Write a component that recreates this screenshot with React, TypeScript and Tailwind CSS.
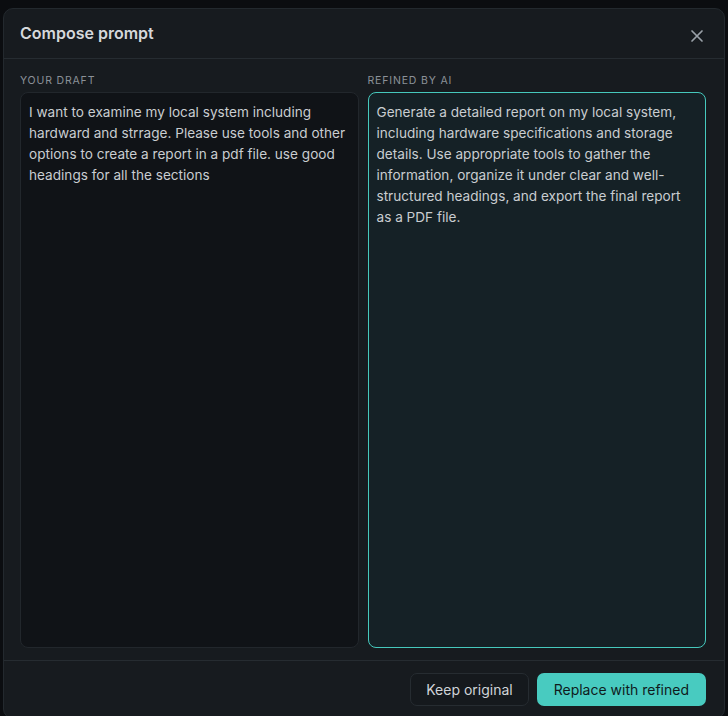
import React from "react";

export default function App() {
  return (
    <div
      className="h-[716px] w-[728px] overflow-hidden bg-[#0b0d10] pl-[3px] pr-[3px] pt-[8px]"
      style={{ fontFamily: "Inter, 'Noto Sans', sans-serif" }}
    >
      <div className="flex h-[711px] w-[722px] flex-col rounded-[10px] border border-[#23292e] bg-[#171b1f]">
        <div className="flex h-[50px] shrink-0 items-center justify-between border-b border-[#262c31] pl-[16px] pr-[20px]">
          <h2 className="-mt-[1px] text-[16px] font-semibold text-[#d5d8db]">Compose prompt</h2>
          <button className="mt-[4px] text-[#9aa1a8]">
            <svg width="14" height="14" viewBox="0 0 14 14" fill="none" stroke="currentColor" strokeWidth="1.7" strokeLinecap="round">
              <path d="M2 2 L12 12 M12 2 L2 12" />
            </svg>
          </button>
        </div>
        <div className="grid min-h-0 flex-1 grid-cols-2 gap-[9px] pb-[12px] pl-[16px] pr-[18px] pt-[16px]">
          <div className="flex min-h-0 flex-col">
            <div className="mb-[5px] text-[10.5px] leading-[12px] tracking-[0.08em] text-[#8b9198]">YOUR DRAFT</div>
            <div className="flex-1 rounded-[8px] border border-[#22272c] bg-[#101317] px-[8px] pb-[8px] pt-[9px] text-[13.6px] leading-[21px] text-[#c9cdd1]">
              I want to examine my local system including hardward and strrage. Please use tools and other options to create a report in a pdf file. use good headings for all the sections
            </div>
          </div>
          <div className="flex min-h-0 flex-col">
            <div className="mb-[5px] text-[10.5px] leading-[12px] tracking-[0.08em] text-[#8b9198]">REFINED BY AI</div>
            <div className="flex-1 rounded-[8px] border border-[#46c9bd] bg-[#152126] px-[8px] pb-[8px] pt-[9px] text-[13.6px] leading-[21px] text-[#c9cdd1]">
              Generate a detailed report on my local system, including hardware specifications and storage details. Use appropriate tools to gather the information, organize it under clear and well-structured headings, and export the final report as a PDF file.
            </div>
          </div>
        </div>
        <div className="flex shrink-0 items-start justify-end gap-[8px] border-t border-[#262c31] pb-[12px] pr-[18px] pt-[12px]">
          <button className="h-[33px] rounded-[7px] border border-[#262c31] bg-[#15191d] px-[15px] text-[14px] text-[#d0d4d8]">
            Keep original
          </button>
          <button className="h-[33px] rounded-[7px] bg-[#48cbc0] px-[17px] text-[14px] text-[#0f1a1c]">
            Replace with refined
          </button>
        </div>
      </div>
    </div>
  );
}
